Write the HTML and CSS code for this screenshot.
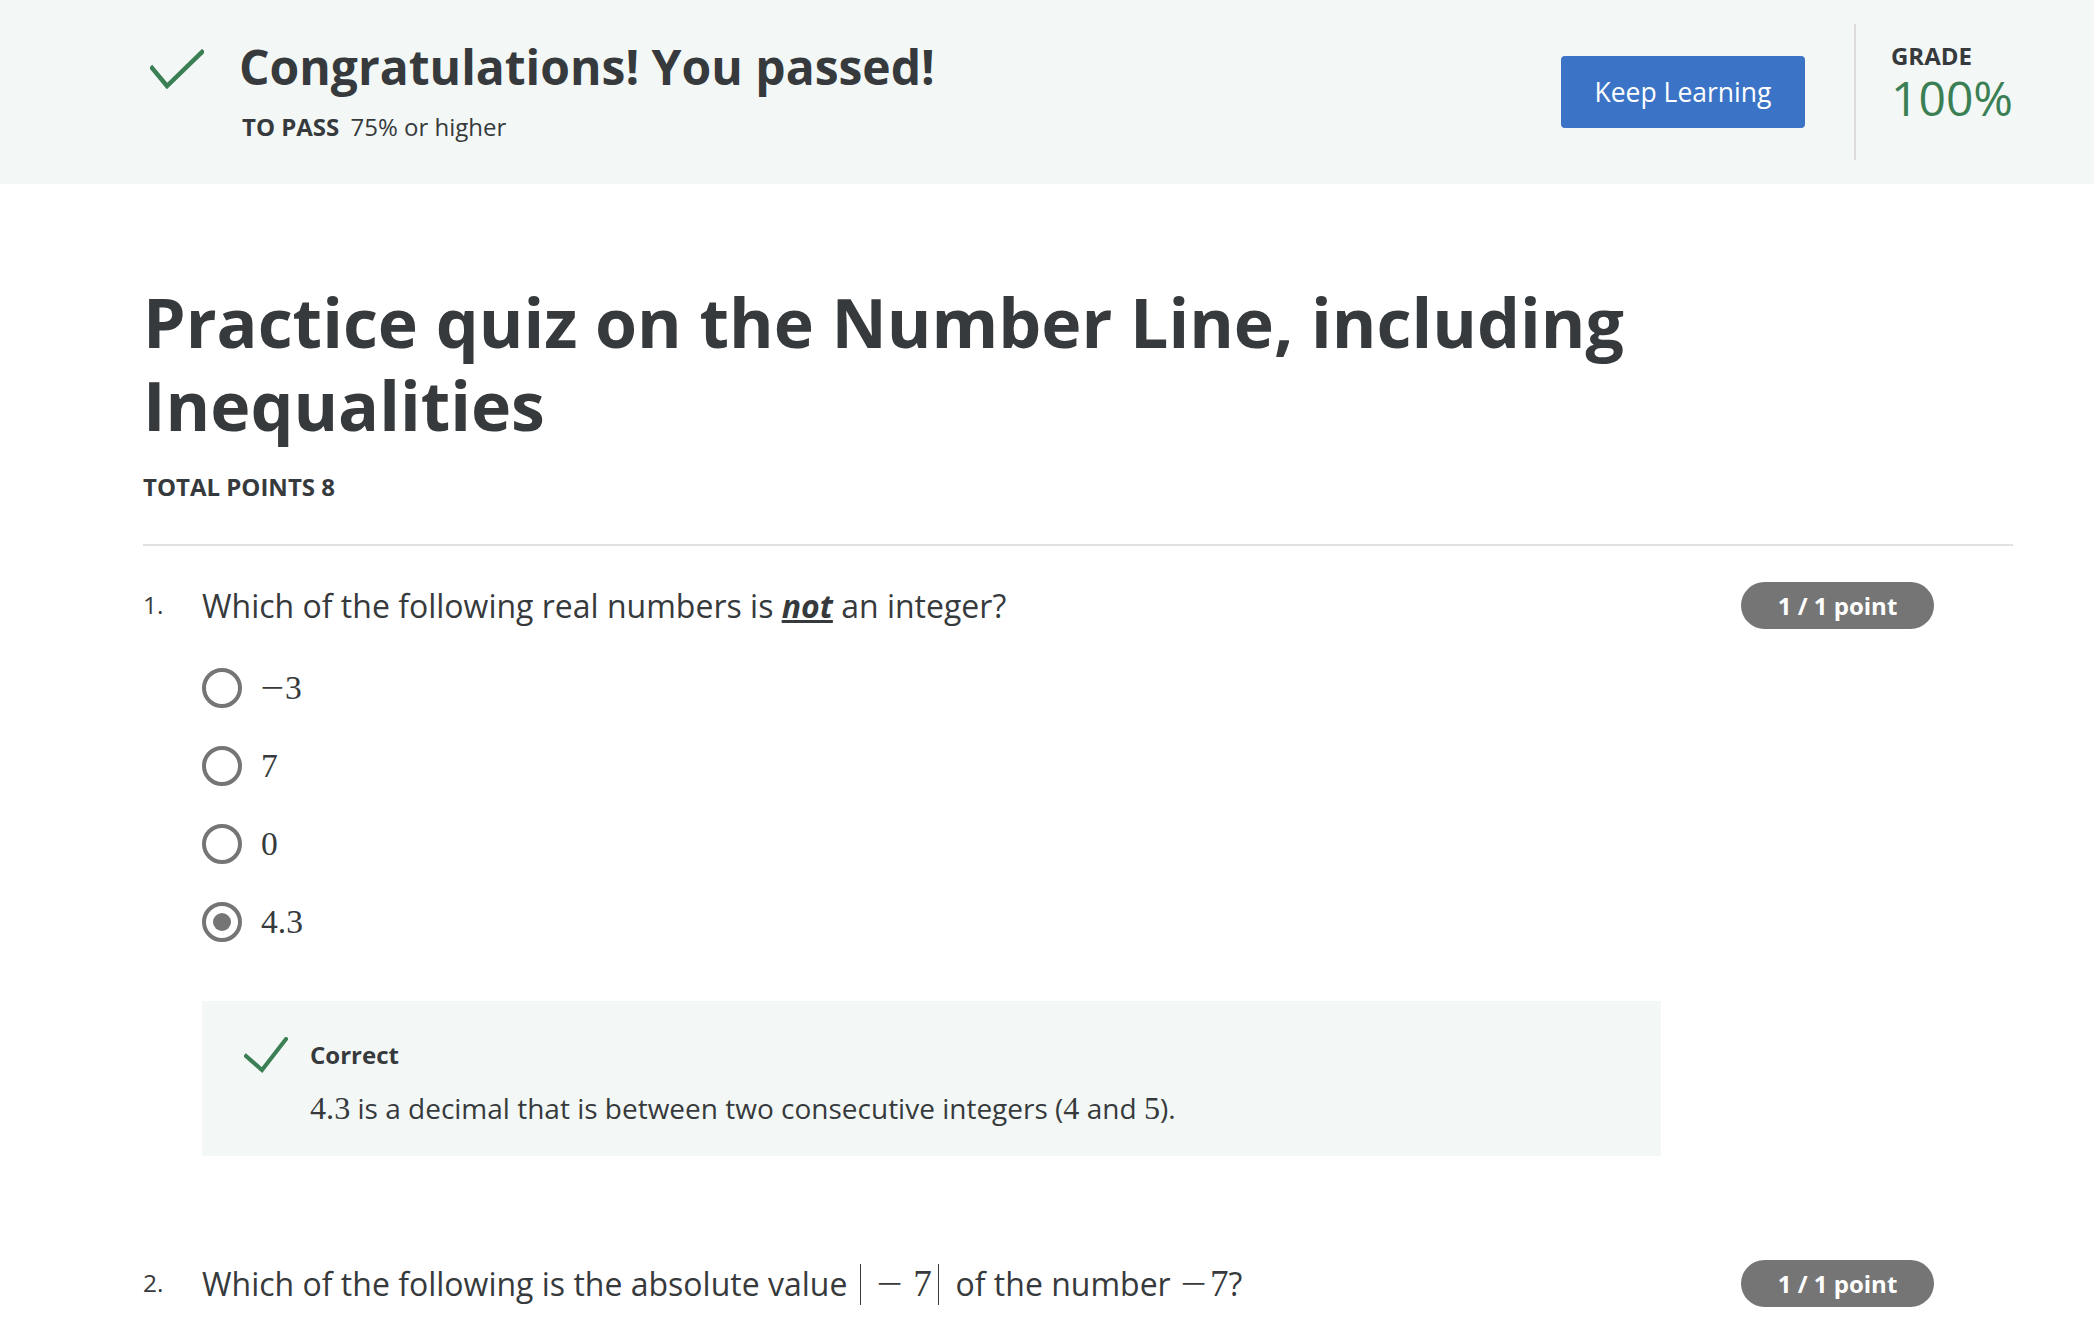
FILE: index.html
```html
<!DOCTYPE html>
<html lang="en">
<head>
<meta charset="utf-8">
<title>Practice quiz on the Number Line, including Inequalities</title>
<link rel="stylesheet" href="styles.css">
</head>
<body>
<header class="pass-banner">
  <div class="pass-main">
    <svg class="pass-check" viewBox="0 0 54 40" width="54" height="40" aria-hidden="true">
      <path d="M2 19 L17 37 L52 3" fill="none" stroke="#3b7f55" stroke-width="4.5" stroke-linecap="square"/>
    </svg>
    <h2 class="pass-title">Congratulations! You passed!</h2>
    <div class="pass-sub"><span class="pass-label">TO PASS</span> 75% or higher</div>
  </div>
  <button class="keep-btn">Keep Learning</button>
  <div class="banner-divider"></div>
  <div class="grade">
    <div class="grade-label">GRADE</div>
    <div class="grade-value">100%</div>
  </div>
</header>

<main class="quiz">
  <h1 class="quiz-title">Practice quiz on the Number Line, including Inequalities</h1>
  <div class="total-points">TOTAL POINTS 8</div>
  <hr class="quiz-rule">

  <section class="question">
    <div class="q-head">
      <span class="q-num">1.</span>
      <div class="q-text">Which of the following real numbers is <em class="q-not">not</em> an integer?</div>
      <span class="q-pill">1 / 1 point</span>
    </div>
    <ul class="options">
      <li class="option"><span class="radio"></span><span class="math"><span class="minus">−</span>3</span></li>
      <li class="option"><span class="radio"></span><span class="math">7</span></li>
      <li class="option"><span class="radio"></span><span class="math">0</span></li>
      <li class="option"><span class="radio radio-on"></span><span class="math">4.3</span></li>
    </ul>
    <div class="feedback">
      <svg class="fb-check" viewBox="0 0 44 36" width="44" height="36" aria-hidden="true">
        <path d="M2 19 L18 33 L42 2" fill="none" stroke="#3b7f55" stroke-width="4" stroke-linecap="square"/>
      </svg>
      <div class="fb-title">Correct</div>
      <div class="fb-text"><span class="math">4.3</span> is a decimal that is between two consecutive integers (<span class="math">4</span> and <span class="math">5</span>).</div>
    </div>
  </section>

  <section class="question">
    <div class="q-head">
      <span class="q-num">2.</span>
      <div class="q-text">Which of the following is the absolute value <span class="math"><span class="abs-bar abs-open"></span><span class="minus bin">−</span>7<span class="abs-bar abs-close"></span></span> of the number <span class="math"><span class="minus neg">−</span>7</span>?</div>
      <span class="q-pill">1 / 1 point</span>
    </div>
  </section>
</main>
</body>
</html>
```
FILE: styles.css
```css
* { box-sizing: border-box; }
body {
  margin: 0;
  font-family: "Open Sans", "Liberation Sans", sans-serif;
  color: #373a3c;
  background: #ffffff;
}

/* Banner */
.pass-banner {
  display: flex;
  align-items: center;
  height: 184px;
  padding: 0 81px 0 150px;
  background: #f3f8f6;
}
.pass-main {
  flex: 1;
  display: grid;
  grid-template-columns: 89px auto;
  align-items: center;
  row-gap: 13px;
  margin-bottom: 6px;
}
.pass-check { display: block; margin-top: 4px; }
.pass-title {
  margin: 0;
  font-size: 48px;
  font-weight: 700;
  line-height: 62px;
}
.pass-sub {
  grid-column: 2;
  font-size: 24px;
  line-height: 32px;
  padding-left: 3px;
}
.pass-label { font-weight: 700; margin-right: 5px; }
.keep-btn {
  width: 244px;
  height: 72px;
  border: 0;
  border-radius: 4px;
  background: #3b74c6;
  color: #ffffff;
  font-family: inherit;
  font-size: 26.5px;
  cursor: pointer;
}
.banner-divider {
  width: 2px;
  height: 136px;
  margin-left: 49px;
  background: #dcdcdc;
}
.grade { margin-left: 35px; padding-bottom: 16px; }
.grade-label {
  font-size: 24px;
  font-weight: 700;
  line-height: 28px;
}
.grade-value {
  font-size: 48px;
  line-height: 56px;
  color: #3b7f55;
}

/* Quiz */
.quiz { padding: 96px 81px 0 143px; }
.quiz-title {
  margin: 0;
  font-size: 68px;
  font-weight: 700;
  line-height: 83px;
  max-width: 1650px;
}
.total-points {
  margin-top: 26px;
  font-size: 24px;
  font-weight: 700;
  line-height: 30px;
}
.quiz-rule {
  margin: 42px 0 0;
  border: 0;
  height: 2px;
  background: #e1e1e1;
}
.question { padding-top: 36px; }
.question + .question { padding-top: 104px; }
.q-head {
  display: flex;
  align-items: center;
}
.q-num {
  width: 59px;
  font-size: 24.5px;
  align-self: flex-start;
  line-height: 45px;
}
.q-text {
  flex: 1;
  font-size: 32px;
  line-height: 47px;
}
.q-not {
  font-weight: 700;
  text-decoration: underline;
}
.q-pill {
  margin-right: 79px;
  width: 193px;
  height: 47px;
  border-radius: 24px;
  background: #757575;
  color: #ffffff;
  font-size: 24px;
  font-weight: 700;
  line-height: 47px;
  text-align: center;
}
.math {
  font-family: "Liberation Serif", "DejaVu Serif", serif;
  font-size: 1.12em;
}
.q-text .math { font-size: 1.16em; }
.fb-text .math { font-size: 1.15em; }
.minus {
  display: inline-block;
  transform: scaleX(1.25);
  margin: 0 3px 0 2px;
}
.options {
  list-style: none;
  margin: 20px 0 0 59px;
  padding: 0;
}
.option {
  display: flex;
  align-items: center;
  height: 78px;
  font-size: 30px;
}
.radio {
  width: 40px;
  height: 40px;
  border: 4px solid #757575;
  border-radius: 50%;
  margin-right: 19px;
  display: flex;
  align-items: center;
  justify-content: center;
}
.radio-on::after {
  content: "";
  width: 18px;
  height: 18px;
  border-radius: 50%;
  background: #757575;
}
.feedback {
  margin: 40px 0 0 59px;
  width: 1459px;
  background: #f3f8f6;
  padding: 36px 20px 29px 42px;
  display: grid;
  grid-template-columns: 66px auto;
  align-items: center;
}
.fb-check { display: block; }
.fb-title {
  font-size: 24px;
  font-weight: 700;
  line-height: 34px;
}
.fb-text {
  grid-column: 2;
  margin-top: 16px;
  font-size: 28px;
  line-height: 38px;
}
.abs-bar {
  display: inline-block;
  width: 1.5px;
  height: 1.1em;
  background: #373a3c;
  vertical-align: -0.24em;
}
.abs-open { margin: 0 8px 0 4px; }
.abs-close { margin: 0 8px 0 6px; }
.minus.bin { margin: 0 13px 0 10px; }
.minus.neg { margin: 0 6px 0 4px; }
```
